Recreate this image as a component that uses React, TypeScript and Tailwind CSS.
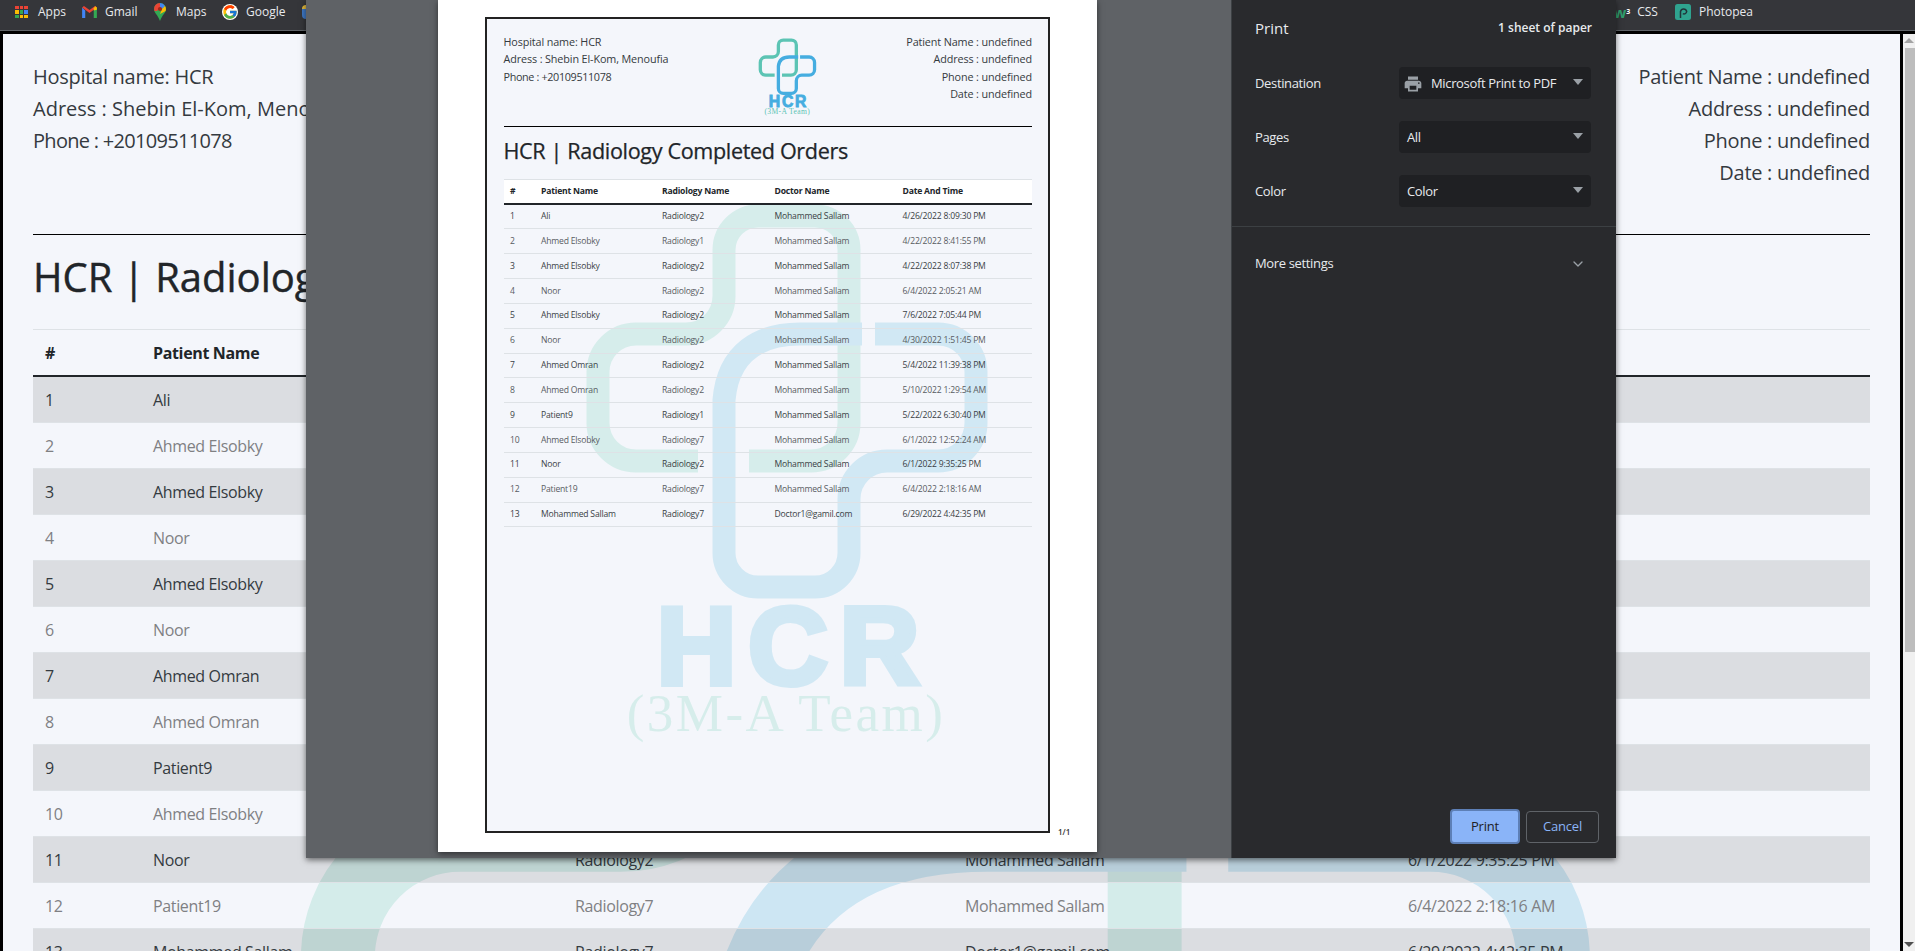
import React from "react";
import { MdPrint } from "react-icons/md";
import { FcGoogle } from "react-icons/fc";
import { ChevronDown } from "lucide-react";

const ORDERS = [
  ["1", "Ali", "Radiology2", "Mohammed Sallam", "4/26/2022 8:09:30 PM"],
  ["2", "Ahmed Elsobky", "Radiology1", "Mohammed Sallam", "4/22/2022 8:41:55 PM"],
  ["3", "Ahmed Elsobky", "Radiology2", "Mohammed Sallam", "4/22/2022 8:07:38 PM"],
  ["4", "Noor", "Radiology2", "Mohammed Sallam", "6/4/2022 2:05:21 AM"],
  ["5", "Ahmed Elsobky", "Radiology2", "Mohammed Sallam", "7/6/2022 7:05:44 PM"],
  ["6", "Noor", "Radiology2", "Mohammed Sallam", "4/30/2022 1:51:45 PM"],
  ["7", "Ahmed Omran", "Radiology2", "Mohammed Sallam", "5/4/2022 11:39:38 PM"],
  ["8", "Ahmed Omran", "Radiology2", "Mohammed Sallam", "5/10/2022 1:29:54 AM"],
  ["9", "Patient9", "Radiology1", "Mohammed Sallam", "5/22/2022 6:30:40 PM"],
  ["10", "Ahmed Elsobky", "Radiology7", "Mohammed Sallam", "6/1/2022 12:52:24 AM"],
  ["11", "Noor", "Radiology2", "Mohammed Sallam", "6/1/2022 9:35:25 PM"],
  ["12", "Patient19", "Radiology7", "Mohammed Sallam", "6/4/2022 2:18:16 AM"],
  ["13", "Mohammed Sallam", "Radiology7", "Doctor1@gamil.com", "6/29/2022 4:42:35 PM"],
];

const COLUMNS = ["#", "Patient Name", "Radiology Name", "Doctor Name", "Date And Time"];

// same drawing for the small logo and both watermarks, viewBox is in paper pixels
function HcrLogo({ className, teal, blue, showText = true }: { className: string; teal: string; blue: string; showText?: boolean }) {
  return (
    <svg viewBox="575 195 425 550" className={className} fill="none">
      <path
        d="M749 461 H811 A38 38 0 0 0 849 423 V250 A34 34 0 0 0 815 216 H758 A34 34 0 0 0 724 250 V296 A38 38 0 0 1 686 334 H636 A38 38 0 0 0 598 372 V423 A38 38 0 0 0 636 461 H698"
        stroke={teal}
        strokeWidth="23"
      />
      <path
        d="M875 334 H938 A38 38 0 0 1 976 372 V423 A38 38 0 0 1 938 461 H887 A38 38 0 0 0 849 499 V553 A34 34 0 0 1 815 587 H758 A34 34 0 0 1 724 553 V400 C728 352 760 334 800 334 H862"
        stroke={blue}
        strokeWidth="23"
      />
      {showText && (
        <>
          <text x="794" y="684" textAnchor="middle" fontFamily="Liberation Sans, sans-serif" fontWeight="700" fontSize="110" letterSpacing="12" fill={blue} stroke={blue} strokeWidth="6">
            HCR
          </text>
          <text x="786" y="731" textAnchor="middle" fontFamily="Liberation Serif, serif" fontSize="53" letterSpacing="2.5" fill={teal}>
            (3M-A Team)
          </text>
        </>
      )}
    </svg>
  );
}

function Bookmark({ icon, label, className }: { icon: React.ReactNode; label: string; className: string }) {
  return (
    <div className={`flex items-center ${className}`}>
      {icon}
      <span className="text-xs text-[#e8eaed]">{label}</span>
    </div>
  );
}

function AppsIcon() {
  const colors = ["#ea4335", "#ea4335", "#ea4335", "#fbbc04", "#34a853", "#4285f4", "#34a853", "#fbbc04", "#fbbc04"];
  return (
    <div className="grid grid-cols-3 gap-[1px] w-[13px] h-[13px] mr-[10px]">
      {colors.map((c, i) => (
        <span key={i} className="w-[3.6px] h-[3.6px]" style={{ background: c }} />
      ))}
    </div>
  );
}

function GmailIcon() {
  return (
    <svg viewBox="0 0 16 13" className="w-[15px] h-[12px] mr-[8px]">
      <path d="M0 1.5 V13 H3.4 V5 Z" fill="#4285f4" />
      <path d="M16 1.5 V13 H12.6 V5 Z" fill="#34a853" />
      <path d="M0 1.5 L8 7.6 L16 1.5 L14 0 L8 4.4 L2 0 Z" fill="#ea4335" />
      <path d="M12.6 5 V2.5 L14.2 0.2 L16 1.5 V4 Z" fill="#fbbc04" />
    </svg>
  );
}

function MapsIcon() {
  return (
    <svg viewBox="0 0 12 18" className="w-[12px] h-[18px] mr-[10px]">
      <path d="M6 0 A6 6 0 0 1 12 6 C12 10 8 12 6 18 C4 12 0 10 0 6 A6 6 0 0 1 6 0 Z" fill="#34a853" />
      <path d="M1.5 2 A6 6 0 0 1 6 0 L6 4 L3 8 L0.6 8 A6 6 0 0 1 1.5 2 Z" fill="#ea4335" />
      <path d="M6 0 A6 6 0 0 1 11 3 L8 6 L6 4 Z" fill="#4285f4" />
      <path d="M11 3 A6 6 0 0 1 11.6 8 L6 11 L8 6 Z" fill="#fbbc04" />
      <circle cx="6" cy="6" r="2.1" fill="#a5261a" />
    </svg>
  );
}

function PhotopeaIcon() {
  return (
    <svg viewBox="0 0 16 16" className="w-[16px] h-[16px] mr-[8px]">
      <rect width="16" height="16" rx="2.5" fill="#2fa38f" />
      <path d="M5.5 14 V7.5 A3.2 3.2 0 0 1 11.7 7.5 A2.7 2.7 0 0 1 7.8 9.6" stroke="#20343a" strokeWidth="1.5" fill="none" />
    </svg>
  );
}

function SelectBox({ children }: { children: React.ReactNode }) {
  return (
    <div className="relative flex items-center w-[192px] h-[32px] pt-[1px] rounded bg-[#1f2023] text-[13px] tracking-[-0.35px] text-[#e8eaed]">
      {children}
      <svg viewBox="0 0 10 6" className="absolute right-[8px] top-[12px] w-[10px] h-[6px]">
        <polygon points="0,0 10,0 5,6" fill="#9aa0a6" />
      </svg>
    </div>
  );
}

function SettingRow({ label, children }: { label: string; children: React.ReactNode }) {
  return (
    <div className="flex items-center justify-between">
      <span className="pt-[2px] text-[13px] tracking-[-0.35px] text-[#e8eaed]">{label}</span>
      {children}
    </div>
  );
}

function PrintSidebar() {
  return (
    <div className="flex flex-col w-[385px] bg-[#292a2d] border-l border-[#3c4043]">
      <div className="flex items-center justify-between h-[56px] pl-[23px] pr-[24px]">
        <span className="text-[15px] text-[#e8eaed]">Print</span>
        <span className="text-xs font-semibold text-[#e8eaed]">1 sheet of paper</span>
      </div>
      <div className="flex flex-col gap-[22px] mt-[11px] pl-[23px] pr-[25px]">
        <SettingRow label="Destination">
          <SelectBox>
            <MdPrint className="ml-[4px] mr-[8px] text-[#9aa0a6]" size={20} />
            Microsoft Print to PDF
          </SelectBox>
        </SettingRow>
        <SettingRow label="Pages">
          <SelectBox>
            <span className="ml-[8px]">All</span>
          </SelectBox>
        </SettingRow>
        <SettingRow label="Color">
          <SelectBox>
            <span className="ml-[8px]">Color</span>
          </SelectBox>
        </SettingRow>
      </div>
      <div className="mt-[19px] border-t border-[#3c4043] flex items-center justify-between h-[74px] pl-[23px] pr-[30px]">
        <span className="text-[13px] tracking-[-0.35px] text-[#e8eaed]">More settings</span>
        <ChevronDown size={16} className="text-[#9aa0a6]" />
      </div>
      <div className="mt-auto flex items-center justify-end gap-[6px] pr-[17px] pb-[14px]">
        <button className="w-[70px] h-[35px] rounded bg-[#8ab4f8] border-2 border-[#5d7fb6] text-[13px] tracking-[-0.2px] text-[#202124]">Print</button>
        <button className="w-[73px] h-[32px] rounded border border-[#5f6368] text-[13px] tracking-[-0.2px] text-[#8ab4f8]">Cancel</button>
      </div>
    </div>
  );
}

function PaperPreview() {
  return (
    <div className="relative w-[925px] pl-[132px] bg-[#5f6266]">
      <div className="relative w-[659px] h-[852px] pl-[47px] pt-[17px] bg-white shadow-[0_2px_6px_rgba(0,0,0,0.5)]">
        <div className="relative w-[565px] h-[816px] border-2 border-[#222222] bg-[#f4f6fb] overflow-hidden pl-[16.5px] pt-[14px] pr-[16px]">
          <HcrLogo className="absolute left-[88px] top-[176px] w-[425px] h-[550px]" teal="#d6edeb" blue="#d1e8f4" />
          <div className="relative flex justify-between h-[93px] text-[10.8px] tracking-[-0.12px] leading-[17.4px] text-[#343a40]">
            <div>
              <div>Hospital name: HCR</div>
              <div>Adress : Shebin El-Kom, Menoufia</div>
              <div className="tracking-[-0.35px]">Phone : +20109511078</div>
            </div>
            <HcrLogo className="w-[61px] h-[79px] mt-[4px]" teal="#5cc4b4" blue="#45ade0" />
            <div className="text-right">
              <div>Patient Name : undefined</div>
              <div>Address : undefined</div>
              <div>Phone : undefined</div>
              <div>Date : undefined</div>
            </div>
          </div>
          <div className="relative h-px bg-black" />
          <h1 className="relative mt-[10.5px] mb-[15px] text-[21.6px] tracking-[-0.35px] [-webkit-text-stroke:0.25px_#212529] leading-[26px] font-normal text-[#212529]">
            HCR | Radiology Completed Orders
          </h1>
          <table className="relative table-fixed w-[528.5px] border-separate border-spacing-0 text-[8.6px] tracking-[-0.2px]">
            <colgroup>
              <col className="w-[31px]" />
              <col className="w-[121px]" />
              <col className="w-[112.5px]" />
              <col className="w-[128px]" />
              <col className="w-[136px]" />
            </colgroup>
            <thead>
              <tr className="bg-white">
                {COLUMNS.map((c) => (
                  <th key={c} className="h-[26px] pl-[6.5px] text-left font-bold text-[#212529] border-t border-[#dee2e6] border-b-2 border-b-[#212529]">
                    {c}
                  </th>
                ))}
              </tr>
            </thead>
            <tbody>
              {ORDERS.map((row, i) => (
                <tr key={row[0]} className={i % 2 === 0 ? "text-[#3a3f45]" : "text-[#585c62]"}>
                  {row.map((cell, j) => (
                    <td key={j} className="h-[24.85px] pl-[6.5px] border-b border-[#dee2e6]">
                      {cell}
                    </td>
                  ))}
                </tr>
              ))}
            </tbody>
          </table>
        </div>
        <span className="absolute left-[620px] top-[826px] text-[8px] font-semibold text-[#333333]">1/1</span>
      </div>
    </div>
  );
}

function ReportPage() {
  return (
    <div className="relative flex-1 bg-[#f4f6fb] pl-[30px] pr-[30px] pt-[27px] overflow-hidden">
      <HcrLogo className="absolute left-[261px] top-[354px] w-[1366px] h-[1768px]" teal="#d4ecea" blue="#cde6f3" showText={false} />
      <div className="relative flex justify-between h-[173px] text-[20px] tracking-[-0.28px] leading-[32px] text-[#343a40]">
        <div>
          <div>Hospital name: HCR</div>
          <div className="tracking-normal">Adress : Shebin El-Kom, Menoufia</div>
          <div className="tracking-[-0.7px]">Phone : +20109511078</div>
        </div>
        <div className="text-right">
          <div>Patient Name : undefined</div>
          <div>Address : undefined</div>
          <div>Phone : undefined</div>
          <div>Date : undefined</div>
        </div>
      </div>
      <div className="relative h-px bg-black" />
      <h1 className="relative mt-[18px] mb-[28px] text-[40px] [-webkit-text-stroke:0.4px_#212529] leading-[48px] font-normal text-[#212529]">
        HCR | Radiology Completed Orders
      </h1>
      <table className="relative table-fixed w-[1837px] border-separate border-spacing-0 text-base tracking-[-0.35px]">
        <colgroup>
          <col className="w-[108px]" />
          <col className="w-[422px]" />
          <col className="w-[390px]" />
          <col className="w-[443px]" />
          <col className="w-[474px]" />
        </colgroup>
        <thead>
          <tr>
            {COLUMNS.map((c) => (
              <th key={c} className="h-[48px] pl-[12px] text-left font-bold text-[#212529] border-t border-[#dee2e6] border-b-2 border-b-[#212529]">
                {c}
              </th>
            ))}
          </tr>
        </thead>
        <tbody>
          {ORDERS.map((row, i) => (
            <tr key={row[0]} className={i % 2 === 0 ? "bg-black/10 text-[#343a40]" : "text-[#7f8083]"}>
              {row.map((cell, j) => (
                <td key={j} className="h-[46px] pl-[12px] border-b border-[#dee2e6]">
                  {cell}
                </td>
              ))}
            </tr>
          ))}
        </tbody>
      </table>
    </div>
  );
}

export default function App() {
  return (
    <div className="relative flex flex-col h-[951px] overflow-hidden bg-[#35363a] font-['Open_Sans',sans-serif]">
      <div className="flex items-center h-[31px] pb-[6px] pl-[15px] border-b border-[#5f6368]">
        <Bookmark icon={<AppsIcon />} label="Apps" className="w-[67px]" />
        <Bookmark icon={<GmailIcon />} label="Gmail" className="w-[72px]" />
        <Bookmark icon={<MapsIcon />} label="Maps" className="w-[68px]" />
        <Bookmark icon={<FcGoogle className="mr-[8px] w-[16px] h-[16px] rounded-full bg-white" />} label="Google" className="w-[80px]" />
        <div className="w-[10px] h-[14px] rounded-sm bg-[#3f78c4] border-t-4 border-[#e2b93b]" />
        <div className="ml-auto mr-[162px] flex items-center">
          <span className="mr-[7px] text-[15px] leading-none font-bold text-[#2f9e6e]">
            w<sup className="text-[7px] text-white">3</sup>
          </span>
          <span className="mr-[17px] text-xs text-[#e8eaed]">CSS</span>
          <Bookmark icon={<PhotopeaIcon />} label="Photopea" className="" />
        </div>
      </div>

      <div className="flex flex-1 min-h-0 bg-black pt-[3px] pl-[3px]">
        <ReportPage />
        <div className="ml-[3px] relative w-[12px] bg-[#f0f0f0]">
          <svg viewBox="0 0 10 5" className="absolute left-[1px] top-[4px] w-[10px] h-[5px]">
            <polygon points="0,5 10,5 5,0" fill="#a3a3a3" />
          </svg>
          <div className="absolute left-[2px] right-0 top-[14px] h-[604px] bg-[#bdbdbd]" />
          <svg viewBox="0 0 10 5" className="absolute left-[1px] bottom-[4px] w-[10px] h-[5px]">
            <polygon points="0,0 10,0 5,5" fill="#505050" />
          </svg>
        </div>
      </div>

      {/* print dialog on top of the page */}
      <div className="absolute left-[306px] top-0 flex w-[1310px] h-[858px] shadow-[0_2px_6px_rgba(0,0,0,0.55)]">
        <PaperPreview />
        <PrintSidebar />
      </div>
    </div>
  );
}
